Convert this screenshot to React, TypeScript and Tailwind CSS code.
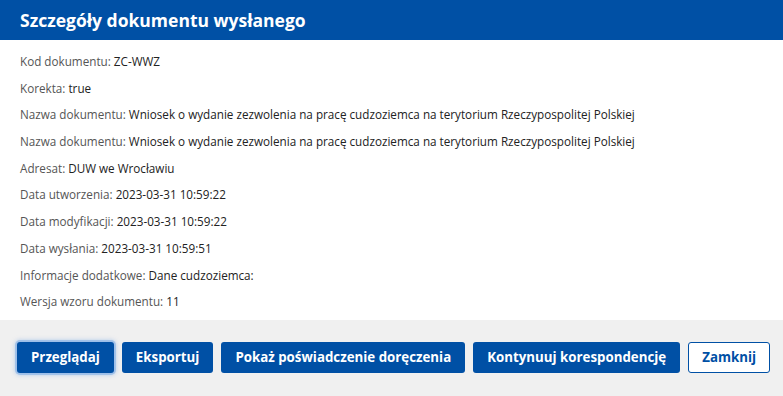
const rows: [string, string][] = [
  ['Kod dokumentu', 'ZC-WWZ'],
  ['Korekta', 'true'],
  ['Nazwa dokumentu', 'Wniosek o wydanie zezwolenia na pracę cudzoziemca na terytorium Rzeczypospolitej Polskiej'],
  ['Nazwa dokumentu', 'Wniosek o wydanie zezwolenia na pracę cudzoziemca na terytorium Rzeczypospolitej Polskiej'],
  ['Adresat', 'DUW we Wrocławiu'],
  ['Data utworzenia', '2023-03-31 10:59:22'],
  ['Data modyfikacji', '2023-03-31 10:59:22'],
  ['Data wysłania', '2023-03-31 10:59:51'],
  ['Informacje dodatkowe', 'Dane cudzoziemca:'],
  ['Wersja wzoru dokumentu', '11'],
];

const primary =
  'h-[31px] shrink-0 whitespace-nowrap rounded-[3px] bg-[#0050a5] px-[14px] text-[13.3px] font-bold text-white';

export default function App() {
  return (
    <div className="w-[783px] h-[396px] bg-white font-['Open_Sans',sans-serif] flex flex-col">
      {/* Header */}
      <div className="h-10 bg-[#0050a5] px-5 flex items-center">
        <h1 className="text-[17.5px] font-bold text-white">Szczegóły dokumentu wysłanego</h1>
      </div>

      {/* Details */}
      <div className="flex flex-col gap-[10.7px] px-5 pt-[13px] pb-[11px]">
        {rows.map(([label, value], i) => (
          <p key={i} className="h-4 text-[11.7px] leading-4 text-[#555]">
            {label}: <span className="text-[#222]">{value}</span>
          </p>
        ))}
      </div>

      {/* Footer */}
      <div className="flex-1 bg-[#f0f0f0] px-[17px] pt-[22px] flex gap-2">
        <button className={`${primary} shadow-[0_0_0_2px_rgba(120,170,230,0.5),0_0_4px_2px_rgba(120,170,230,0.5)]`}>
          Przeglądaj
        </button>
        <button className={primary}>Eksportuj</button>
        <button className={primary}>Pokaż poświadczenie doręczenia</button>
        <button className={primary}>Kontynuuj korespondencję</button>
        <button className="h-[31px] shrink-0 whitespace-nowrap rounded-[3px] border border-[#0050a5] bg-white px-[13px] text-[13.3px] font-bold text-[#0050a5]">
          Zamknij
        </button>
      </div>
    </div>
  );
}
